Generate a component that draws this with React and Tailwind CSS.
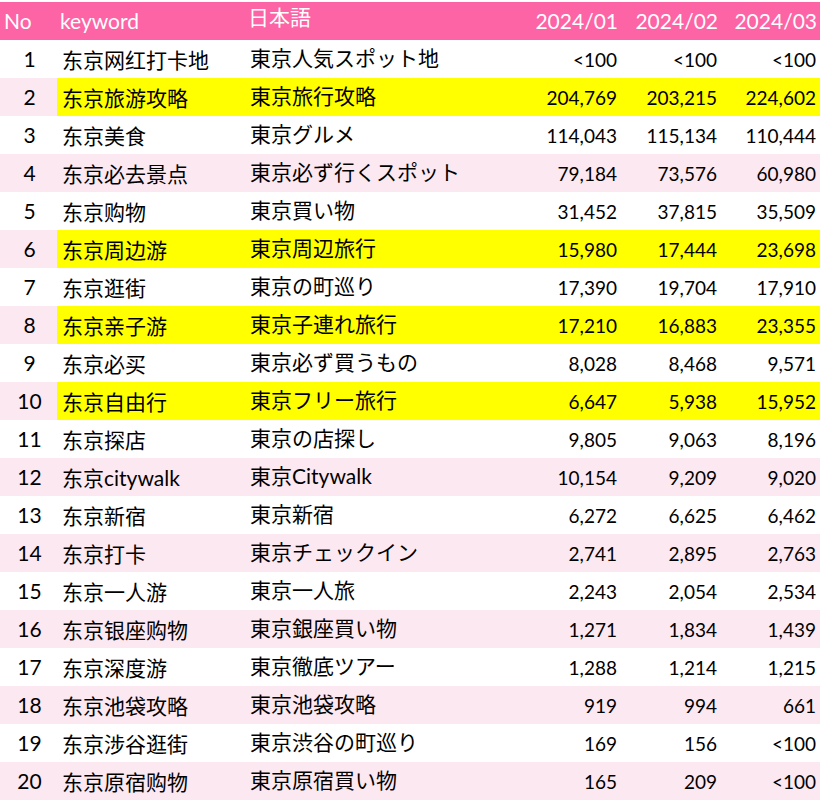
import React from "react";

const rows = [
  ["东京网红打卡地", "東京人気スポット地", "<100", "<100", "<100"],
  ["东京旅游攻略", "東京旅行攻略", "204,769", "203,215", "224,602", true],
  ["东京美食", "東京グルメ", "114,043", "115,134", "110,444"],
  ["东京必去景点", "東京必ず行くスポット", "79,184", "73,576", "60,980"],
  ["东京购物", "東京買い物", "31,452", "37,815", "35,509"],
  ["东京周边游", "東京周辺旅行", "15,980", "17,444", "23,698", true],
  ["东京逛街", "東京の町巡り", "17,390", "19,704", "17,910"],
  ["东京亲子游", "東京子連れ旅行", "17,210", "16,883", "23,355", true],
  ["东京必买", "東京必ず買うもの", "8,028", "8,468", "9,571"],
  ["东京自由行", "東京フリー旅行", "6,647", "5,938", "15,952", true],
  ["东京探店", "東京の店探し", "9,805", "9,063", "8,196"],
  ["东京citywalk", "東京Citywalk", "10,154", "9,209", "9,020"],
  ["东京新宿", "東京新宿", "6,272", "6,625", "6,462"],
  ["东京打卡", "東京チェックイン", "2,741", "2,895", "2,763"],
  ["东京一人游", "東京一人旅", "2,243", "2,054", "2,534"],
  ["东京银座购物", "東京銀座買い物", "1,271", "1,834", "1,439"],
  ["东京深度游", "東京徹底ツアー", "1,288", "1,214", "1,215"],
  ["东京池袋攻略", "東京池袋攻略", "919", "994", "661"],
  ["东京涉谷逛街", "東京渋谷の町巡り", "169", "156", "<100"],
  ["东京原宿购物", "東京原宿買い物", "165", "209", "<100"],
];

const font = { fontFamily: 'Lato, "Noto Sans CJK SC", sans-serif' };

export default function App() {
  return (
    <div className="w-[822px] h-[808px] bg-white pt-[2px] text-black" style={font}>
      <div className="w-[820px]">
        <div className="flex h-[38px] bg-[#fd64a6] text-white text-[21px]">
          <div className="w-[57px] flex items-center pl-[4px]">No</div>
          <div className="w-[188px] flex items-center pl-[3px]">keyword</div>
          <div className="w-[275px] flex items-center pl-[3px] pb-[8px]" style={{ fontFamily: '"Noto Sans CJK JP", sans-serif' }}>
            日本語
          </div>
          <div className="w-[100px] flex items-center justify-end pr-[2px]">2024/01</div>
          <div className="w-[100px] flex items-center justify-end pr-[2px]">2024/02</div>
          <div className="w-[100px] flex items-center justify-end pr-[3px]">2024/03</div>
        </div>
        {rows.map((r, i) => {
          const striped = i % 2 === 1;
          const rowBg = r[5] ? "bg-[#ffff00]" : striped ? "bg-[#fce8f1]" : "bg-white";
          return (
            <div key={i} className={"flex h-[38px] " + (striped ? "bg-[#fce8f1]" : "bg-white")}>
              <div className="w-[57px] flex items-center justify-center pl-[2px] text-[21px]">{i + 1}</div>
              <div className={"flex flex-1 " + rowBg}>
                <div className="w-[188px] flex items-center pl-[5px] pt-[2px] text-[21px]" style={{ fontFamily: 'Lato, "Noto Sans CJK SC", sans-serif' }}>
                  {r[0]}
                </div>
                <div className="w-[275px] flex items-center pl-[5px] pb-[2px] text-[21px]" style={{ fontFamily: 'Lato, "Noto Sans CJK JP", sans-serif' }}>
                  {r[1]}
                </div>
                <div className="w-[100px] flex items-center justify-end pr-[3px] pt-[3px] text-[19px]">{r[2]}</div>
                <div className="w-[100px] flex items-center justify-end pr-[3px] pt-[3px] text-[19px]">{r[3]}</div>
                <div className="w-[100px] flex items-center justify-end pr-[4px] pt-[3px] text-[19px]">{r[4]}</div>
              </div>
            </div>
          );
        })}
      </div>
    </div>
  );
}
